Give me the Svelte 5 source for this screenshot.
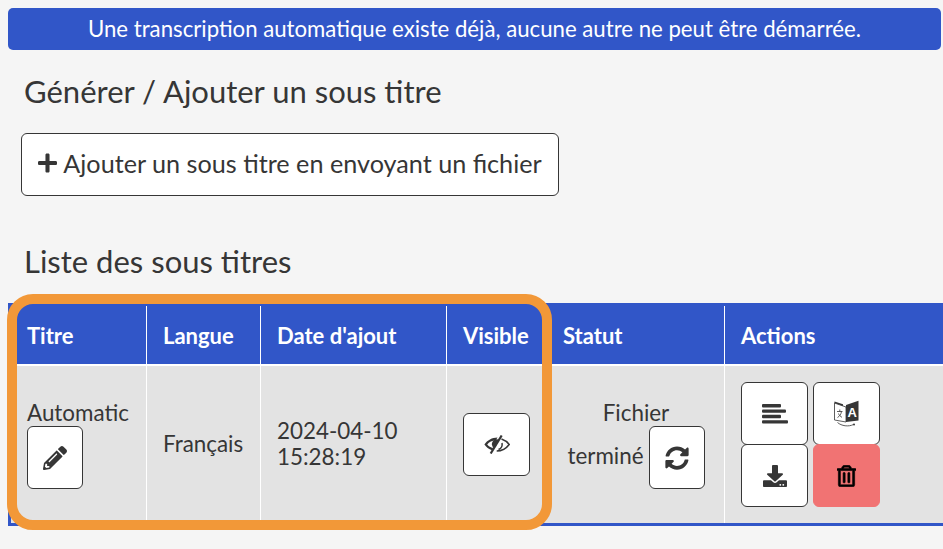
<script>
  // toolbar icons (font-awesome shapes)
  const paths = {
    plus: "M416 208H272V64c0-17.67-14.33-32-32-32h-32c-17.67 0-32 14.33-32 32v144H32c-17.67 0-32 14.33-32 32v32c0 17.67 14.33 32 32 32h144v144c0 17.67 14.33 32 32 32h32c17.67 0 32-14.33 32-32V304h144c17.67 0 32-14.33 32-32v-32c0-17.67-14.33-32-32-32z",
    pencil: "M497.9 142.1l-46.1 46.1c-4.7 4.7-12.3 4.7-17 0l-111-111c-4.7-4.7-4.7-12.3 0-17l46.1-46.1c18.7-18.7 49.1-18.7 67.9 0l60.1 60.1c18.8 18.7 18.8 49.1 0 67.9zM284.2 99.8L21.6 362.4.4 483.9c-2.9 16.4 11.4 30.6 27.8 27.8l121.5-21.3 262.6-262.6c4.7-4.7 4.7-12.3 0-17l-111-111c-4.8-4.7-12.4-4.7-17.1 0zM124.1 339.9c-5.5-5.5-5.5-14.3 0-19.8l154-154c5.5-5.5 14.3-5.5 19.8 0s5.5 14.3 0 19.8l-154 154c-5.5 5.5-14.3 5.5-19.8 0zM88 424h48v36.3l-64.5 11.3-31.1-31.1L51.7 376H88v48z",
    sync: "M370.72 133.28C339.458 104.008 298.888 87.962 255.848 88c-77.458.068-144.328 53.178-162.791 126.85-1.344 5.363-6.122 9.15-11.651 9.15H24.103c-7.498 0-13.194-6.807-11.807-14.176C33.933 94.924 134.813 8 256 8c66.448 0 126.791 26.136 171.315 68.685L463.03 40.97C478.149 25.851 504 36.559 504 57.941V192c0 13.255-10.745 24-24 24H345.941c-21.382 0-32.09-25.851-16.971-40.971l41.75-41.749zM32 296h134.059c21.382 0 32.09 25.851 16.971 40.971l-41.75 41.75c31.262 29.273 71.835 45.319 114.876 45.28 77.418-.07 144.315-53.144 162.787-126.849 1.344-5.363 6.122-9.15 11.651-9.15h57.304c7.498 0 13.194 6.807 11.807 14.176C478.067 417.076 377.187 504 256 504c-66.448 0-126.791-26.136-171.315-68.685L48.97 471.03C33.851 486.149 8 475.441 8 454.059V320c0-13.255 10.745-24 24-24z",
    download: "M216 0h80c13.3 0 24 10.7 24 24v168h87.7c17.8 0 26.7 21.5 14.1 34.1L269.7 378.3c-7.5 7.5-19.8 7.5-27.3 0L90.1 226.1c-12.6-12.6-3.7-34.1 14.1-34.1H192V24c0-13.3 10.7-24 24-24zm296 376v112c0 13.3-10.7 24-24 24H24c-13.3 0-24-10.7-24-24V376c0-13.3 10.7-24 24-24h146.7l49 49c20.1 20.1 52.5 20.1 72.6 0l49-49H488c13.3 0 24 10.7 24 24zm-124 88c0-11-9-20-20-20s-20 9-20 20 9 20 20 20 20-9 20-20zm64 0c0-11-9-20-20-20s-20 9-20 20 9 20 20 20 20-9 20-20z",
    trash: "M268 416h24a12 12 0 0 0 12-12V188a12 12 0 0 0-12-12h-24a12 12 0 0 0-12 12v216a12 12 0 0 0 12 12zM432 80h-82.41l-34-56.7A48 48 0 0 0 274.41 0H173.59a48 48 0 0 0-41.16 23.3L98.41 80H16A16 16 0 0 0 0 96v16a16 16 0 0 0 16 16h16v336a48 48 0 0 0 48 48h288a48 48 0 0 0 48-48V128h16a16 16 0 0 0 16-16V96a16 16 0 0 0-16-16zM171.84 50.91A6 6 0 0 1 177 48h94a6 6 0 0 1 5.15 2.91L293.61 80H154.39zM368 464H80V128h288zm-212-48h24a12 12 0 0 0 12-12V188a12 12 0 0 0-12-12h-24a12 12 0 0 0-12 12v216a12 12 0 0 0 12 12z",
  };
</script>

<main class="page">
  <div class="notice">Une transcription automatique existe déjà, aucune autre ne peut être démarrée.</div>

  <h2 class="title first">Générer / Ajouter un sous titre</h2>
  <button class="btn add">
    <svg class="plus" viewBox="0 0 448 512"><path d={paths.plus} /></svg>
    Ajouter un sous titre en envoyant un fichier
  </button>

  <h2 class="title second">Liste des sous titres</h2>

  <div class="table-wrap">
    <table>
      <colgroup>
        <col style="width:135px" />
        <col style="width:114px" />
        <col style="width:186px" />
        <col style="width:100px" />
        <col style="width:178px" />
        <col />
      </colgroup>
      <thead>
        <tr>
          <th>Titre</th>
          <th>Langue</th>
          <th>Date d'ajout</th>
          <th>Visible</th>
          <th class="no-sep">Statut</th>
          <th>Actions</th>
        </tr>
      </thead>
      <tbody>
        <tr>
          <td>
            Automatic
            <button class="btn icon small">
              <svg class="ic" viewBox="0 0 512 512"><path d={paths.pencil} /></svg>
            </button>
          </td>
          <td class="mid">Français</td>
          <td class="mid">2024-04-10<br />15:28:19</td>
          <td>
            <button class="btn icon wide">
              <svg class="eye" viewBox="0 0 26 19">
                <path d="M13.500 2.600C8 2.600 3.300 5.400.4 9.500c1.700 2.600 4.400 4.700 7.600 5.800l1.200-2.200C6.700 12.300 4.600 11.200 3.200 9.500 5.200 7 8 5.600 11.800 5.300z" />
                <path d="M7.800 9.500a5.200 5.200 0 0 1 7.400-4.800l-4.800 8.600a5.200 5.200 0 0 1-2.600-3.800z" />
                <path class="eye-slash" d="M17.700.5 6.700 18.500" />
                <path class="eye-thin" d="M17.500 4c3 1 5.800 3 7.700 5.500-3 4-7 6.500-12.500 6.500" />
                <path class="eye-thin" d="M18 8c.6 2.800-1 5.500-3.500 6.500" />
              </svg>
            </button>
          </td>
          <td class="status no-sep">
            <div>Fichier</div>
            <div class="status-row">
              <span class="term">terminé</span>
              <button class="btn icon small">
                <svg class="ic" viewBox="0 0 512 512"><path d={paths.sync} /></svg>
              </button>
            </div>
          </td>
          <td>
            <div class="actions">
              <button class="btn icon wide">
                <svg class="bars" viewBox="0 0 26 20">
                  <rect x="0" y="0" width="19" height="3.400" rx="1" />
                  <rect x="0" y="5.400" width="24" height="3.400" rx="1" />
                  <rect x="0" y="10.800" width="19" height="3.400" rx="1" />
                  <rect x="0" y="16.200" width="26" height="3.400" rx="1" />
                </svg>
              </button>
              <button class="btn icon wide">
                <svg class="lang" viewBox="0 0 25 28">
                  <path class="thin" d="M.5 3 12 7V22L.5 20Z" />
                  <path d="M.5 1.500 9 4.200V6L.5 3Z" />
                  <path d="M12 5 24.500 .8V20.500L12 22Z" />
                  <path class="thin" d="M3.500 22.500c4 3.500 11 4.500 16 2" />
                  <circle cx="20" cy="24.500" r="1" />
                  <text x="18.300" y="16.500" text-anchor="middle" class="lang-a">A</text>
                  <path class="thin" d="M3 11.500h5.500M5.800 9.500v2M7.500 11.500c-.5 3-2 4.800-4 6M4.500 13.500c.5 1.800 2 3 3.500 3.800" />
                </svg>
              </button>
              <button class="btn icon wide">
                <svg class="down" viewBox="0 0 512 512" preserveAspectRatio="none"><path d={paths.download} /></svg>
              </button>
              <button class="btn icon wide danger">
                <svg class="trash" viewBox="0 0 448 512"><path d={paths.trash} /></svg>
              </button>
            </div>
          </td>
        </tr>
      </tbody>
    </table>
    <div class="highlight"></div>
  </div>
</main>

<style>
  :global(body) {
    margin: 0;
    background: #f5f5f5;
  }
  .page {
    width: 943px;
    height: 549px;
    overflow: hidden;
    padding-top: 8px;
    box-sizing: border-box;
    font-family: Lato, sans-serif;
    color: #363636;
  }
  .notice {
    margin: 0 2px 0 8px;
    height: 42px;
    line-height: 42px;
    background: #3156c8;
    border-radius: 5px;
    color: #fff;
    text-align: center;
    font-size: 22.2px;
  }
  .title {
    margin: 0;
    font-weight: 400;
    font-size: 31px;
    line-height: 36px;
  }
  .title.first {
    margin: 23px 0 24px 24px;
  }
  .title.second {
    margin: 47px 0 24px 24px;
  }
  .btn {
    display: inline-flex;
    align-items: center;
    justify-content: center;
    box-sizing: border-box;
    background: #fff;
    border: 1px solid #363636;
    border-radius: 6px;
    color: #363636;
    font-family: inherit;
    padding: 0;
    margin: 0;
  }
  .add {
    margin-left: 21px;
    width: 538px;
    height: 63px;
    padding-bottom: 3px;
    font-size: 25.2px;
    gap: 6px;
  }
  .plus {
    width: 19px;
    height: 22px;
    fill: #363636;
  }
  .table-wrap {
    position: relative;
    margin-left: 8px;
    width: 935px;
  }
  table {
    width: 935px;
    table-layout: fixed;
    border-collapse: separate;
    border-spacing: 0;
    background: #e3e3e3;
    border: solid #3156c8;
    border-width: 3px 0 3px 3px;
    font-size: 22.4px;
  }
  th {
    height: 60px;
    padding: 0 16px;
    background: #3156c8;
    color: #fff;
    text-align: left;
    font-size: 22px;
    font-weight: 700;
    border-left: 1px solid #fff;
    border-bottom: 2px solid #fff;
    box-sizing: border-box;
  }
  th:first-child {
    border-left: 0;
  }
  td {
    height: 157px;
    padding: 0 16px;
    border-left: 1px solid #fff;
    box-sizing: border-box;
    line-height: 26px;
  }
  td:first-child {
    border-left: 0;
  }
  td.mid {
    padding-bottom: 2px;
  }
  .no-sep {
    border-left-color: transparent;
  }
  .icon {
    vertical-align: middle;
  }
  .small {
    display: flex;
    width: 56px;
    height: 63px;
  }
  .wide {
    width: 67px;
    height: 63px;
  }
  .status {
    text-align: center;
    padding: 0 7px 0 8px;
  }
  .status-row {
    display: flex;
    align-items: center;
    justify-content: center;
    gap: 5px;
  }
  .term {
    margin-bottom: 4px;
  }
  .actions {
    display: grid;
    grid-template-columns: 67px 67px;
    grid-template-rows: 62px 63px;
    gap: 0 5px;
  }
  .ic {
    width: 24px;
    height: 24px;
    fill: #363636;
  }
  .eye {
    width: 26px;
    height: 19px;
    fill: #363636;
  }
  .eye-thin {
    fill: none;
    stroke: #363636;
    stroke-width: 1.500;
  }
  .eye-slash {
    fill: none;
    stroke: #363636;
    stroke-width: 2.200;
  }
  .bars {
    width: 26px;
    height: 20px;
    fill: #363636;
  }
  .lang {
    width: 25px;
    height: 28px;
    fill: #363636;
  }
  .thin {
    fill: none;
    stroke: #363636;
    stroke-width: 0.800;
  }
  .lang-a {
    fill: #fff;
    font-size: 13px;
    font-weight: 700;
    font-family: "Liberation Sans", sans-serif;
  }
  .down {
    width: 24px;
    height: 22px;
    fill: #363636;
  }
  .danger {
    background: #f17373;
    border-color: #f17373;
  }
  .trash {
    width: 19px;
    height: 22px;
    fill: #000;
    stroke: #000;
    stroke-width: 14;
  }
  .highlight {
    position: absolute;
    left: -1px;
    top: -9px;
    width: 545px;
    height: 236px;
    box-sizing: border-box;
    border: 10px solid #f29838;
    border-radius: 26px;
    pointer-events: none;
  }
</style>
